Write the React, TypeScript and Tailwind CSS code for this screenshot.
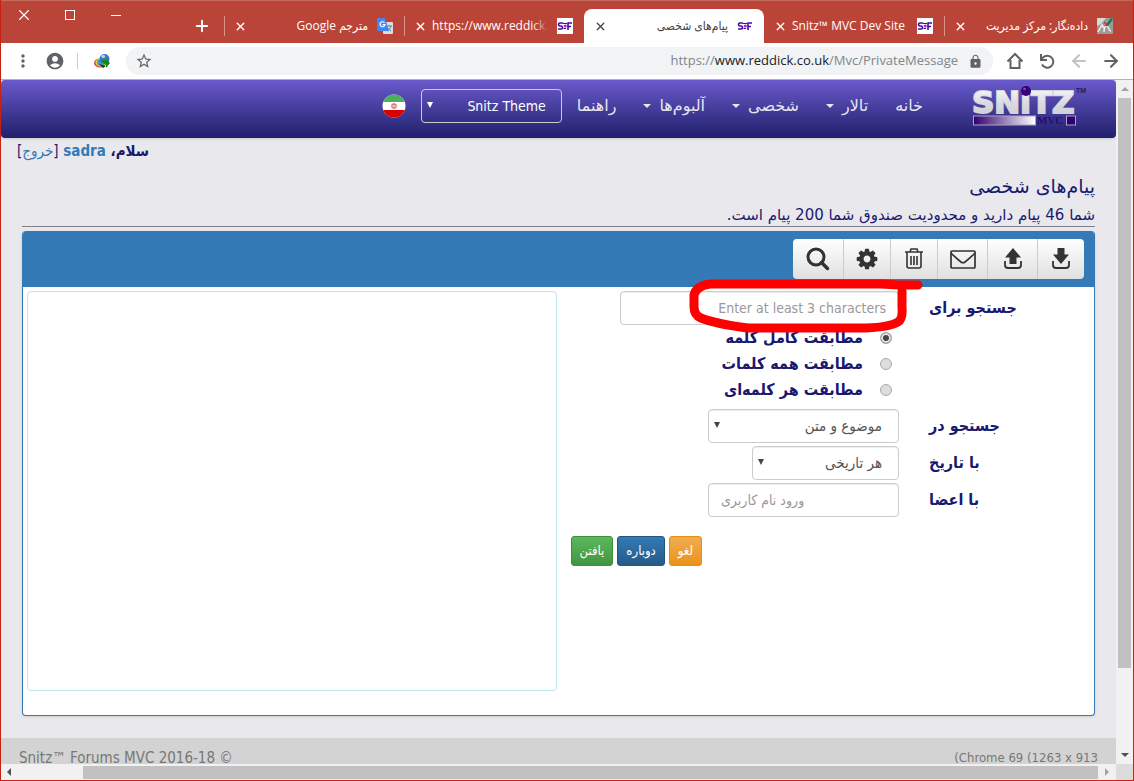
import type { ReactNode } from 'react'
import { ArrowLeft, ArrowRight, Plus, X } from 'lucide-react'
import { MdAccountCircle, MdLock, MdMoreVert, MdStarBorder } from 'react-icons/md'

function SnitzFavicon({ white = true }: { white?: boolean }) {
  return (
    <svg viewBox="0 0 16 16" className="size-4 shrink-0" fill="none" stroke="#3c0f9c" strokeWidth="1.600" aria-hidden="true">
      {white && <rect width="16" height="16" fill="#fff" stroke="none" />}
      <path d="M6 5H3Q1.500 5 1.500 6.500T3 8h1Q5.500 8 5.500 9.500T4 11H1" />
      <path d="M11 12V5h4M11 8.500h3" />
      <path d="M6 5.500h4M6.500 10.500H9" strokeWidth="1" />
      <circle cx="8.300" cy="8" r="1.600" fill="#c01ee0" stroke="none" />
    </svg>
  )
}

function TranslateFavicon() {
  return (
    <svg viewBox="0 0 16 16" className="size-4 shrink-0" aria-hidden="true">
      <rect x="6" y="4" width="10" height="12" rx="1" fill="#dcdcdc" />
      <path d="M9 8h6M12 7v1M14 8c-.5 2.500-2 4-4 5M10.500 9.500c.8 1.500 2 2.500 3.500 3.500" stroke="#6b8a95" fill="none" />
      <path d="M1 0h7l4 13H1a1 1 0 0 1-1-1V1a1 1 0 0 1 1-1z" fill="#4285f4" />
      <path d="M7.500 4.700A2.500 2.500 0 1 0 8 6.700H5.500" stroke="#fff" strokeWidth="1.200" fill="none" />
    </svg>
  )
}

function LeafFavicon() {
  return (
    <svg viewBox="0 0 16 16" className="size-4 shrink-0" aria-hidden="true">
      <rect width="16" height="16" fill="#9a9a96" />
      <path d="M0 0h9L4 6 0 8z" fill="#d8d8d4" />
      <path d="M1 14 5 7l2 3M7 14c0-4 1-6 3-6s1 5 4 5" stroke="#eee" strokeWidth="1.500" fill="none" />
      <path d="M8 8 14 0l2 1-5 7z" fill="#0a7a4c" />
      <path d="M7 4l3 3-1 1" stroke="#d03030" strokeWidth="1.500" fill="none" />
    </svg>
  )
}

type TabProps = { title: string; icon: ReactNode; active?: boolean; line?: boolean; fade?: boolean }

function Tab({ title, icon, active, line, fade }: TabProps) {
  return (
    <div
      className={
        active
          ? 'relative flex h-[34px] w-[180px] shrink items-center rounded-t-lg bg-white pr-[11px] pl-2 text-[#444]'
          : 'relative flex h-[34px] w-[180px] shrink items-center pr-[11px] pl-2 text-white'
      }
    >
      {icon}
      <span
        dir="auto"
        className="relative mr-[9px] ml-1 min-w-0 flex-1 font-[Open_Sans,DejaVu_Sans_Condensed,sans-serif] text-xs whitespace-nowrap"
      >
        {title}
        {fade && <span className="absolute inset-y-0 -right-2 w-6 bg-linear-to-r from-transparent to-[#bb4438] to-70%" />}
      </span>
      <button aria-label="بستن" className="flex size-4 items-center justify-center">
        <X size={13} strokeWidth={2.500} />
      </button>
      {line && <span className="absolute top-[7px] left-0 h-5 w-px bg-[#d9958c]" />}
    </div>
  )
}

function TitleBar() {
  return (
    <div className="flex h-[43px] items-end border-t border-[#c46a5f] bg-[#bb4438] pr-[9px]">
      <Tab title="داده‌نگار: مرکز مدیریت" icon={<LeafFavicon />} line />
      <Tab title="Snitz™ MVC Dev Site" icon={<SnitzFavicon />} />
      <Tab title="پیام‌های شخصی" icon={<SnitzFavicon white={false} />} active />
      <Tab title="https://www.reddick.c" icon={<SnitzFavicon />} line fade />
      <Tab title="مترجم Google" icon={<TranslateFavicon />} line />
      <button aria-label="زبانه جدید" className="mr-3 flex h-[34px] w-5 items-center justify-center text-white">
        <Plus size={18} strokeWidth={2.500} />
      </button>
      <div className="flex-1" />
      <div className="flex self-start text-white">
        <button aria-label="کوچک کردن" className="flex h-7 w-[46px] items-center justify-center">
          <span className="h-px w-[10px] bg-white" />
        </button>
        <button aria-label="بزرگ کردن" className="flex h-7 w-[46px] items-center justify-center">
          <span className="size-[10px] border border-white" />
        </button>
        <button aria-label="بستن پنجره" className="flex h-7 w-[46px] items-center justify-center">
          <X size={18} strokeWidth={1.500} />
        </button>
      </div>
    </div>
  )
}

function AddressBar() {
  return (
    <div className="flex h-[37px] items-center border-b border-[#b3b3b3] bg-white pr-3 text-[#5f6368]">
      <div className="flex items-center gap-3">
        <button aria-label="عقب"><ArrowRight size={20} strokeWidth={2.500} /></button>
        <button aria-label="جلو" className="text-[#c0c2c4]"><ArrowLeft size={20} strokeWidth={2.500} /></button>
        <button aria-label="بارگذاری">
          <svg viewBox="0 0 20 20" className="size-5" fill="none" stroke="currentColor" strokeWidth="2" aria-hidden="true">
            <path d="M4 3v6h6M4.500 8.500 6 6.500A6 6 0 1 1 5 13.500" />
          </svg>
        </button>
        <button aria-label="خانه">
          <svg viewBox="0 0 20 20" className="size-5" fill="none" stroke="currentColor" strokeWidth="2" aria-hidden="true">
            <path d="M2.500 10.500 10 3l7.500 7.500M5.500 9v8h9V9" />
          </svg>
        </button>
      </div>
      <div className="mr-3 flex h-7 flex-1 items-center rounded-full bg-[#f1f3f4] pr-[10px] pl-[9px]">
        <MdLock size={15} className="shrink-0" />
        <div
          dir="ltr"
          className="mr-[10px] flex-1 text-right font-[Open_Sans,sans-serif] text-[13px] whitespace-nowrap text-[#80868b]"
        >
          https://<span className="text-[#202124]">www.reddick.co.uk</span>/Mvc/PrivateMessage
        </div>
        <button aria-label="نشانک"><MdStarBorder size={18} /></button>
      </div>
      <svg viewBox="0 0 16 16" className="mr-4 size-4" aria-hidden="true">
        <ellipse cx="6" cy="10" rx="6" ry="4.500" fill="#e04a2c" />
        <ellipse cx="6.500" cy="9.500" rx="5" ry="4" fill="#f3d02c" />
        <ellipse cx="7" cy="9.500" rx="3.800" ry="3.200" fill="#2d9ad8" />
        <circle cx="10.500" cy="6" r="5" fill="#3d78c8" />
        <path d="M7 3c2-2 5-1 4 1S8 5 7 3z" fill="#b9d8f0" />
        <path d="M6 7h6V5l4 5-4 5v-3z" fill="#138a1c" />
        <path d="m5 11 4 4 3-2z" fill="#123c12" />
      </svg>
      <span className="mr-4 h-4 w-px bg-[#ccc]" />
      <button aria-label="نمایه" className="mr-3"><MdAccountCircle size={20} /></button>
      <button aria-label="فهرست" className="mr-3 ml-[12px]"><MdMoreVert size={20} /></button>
    </div>
  )
}

function Logo() {
  return (
    <svg viewBox="0 0 114 40" direction="ltr" className="h-10 w-[114px]" role="img" aria-label="Snitz MVC">
      <defs>
        <linearGradient id="metal" x1="0" y1="0" x2="0" y2="1">
          <stop offset="0" stopColor="#fff" />
          <stop offset="0.5" stopColor="#dcdce2" />
          <stop offset="1" stopColor="#c8c8d0" />
        </linearGradient>
        <linearGradient id="bar" x1="0" y1="0" x2="1" y2="0">
          <stop offset="0" stopColor="#30006c" />
          <stop offset="1" stopColor="#fff" />
        </linearGradient>
      </defs>
      <text
        x="0"
        y="27"
        fontFamily="DejaVu Sans"
        fontWeight="700"
        fontSize="31"
        stroke="#d2d2dc"
        strokeWidth="2"
        paintOrder="stroke"
        fill="url(#metal)"
      >
        SNıTZ
      </text>
      <circle cx="54" cy="5" r="5" fill="#35007a" />
      <circle cx="52.500" cy="3" r="1.300" fill="#7a4fb0" />
      <text x="104" y="7" fontFamily="Liberation Sans" fontSize="7" fontWeight="700" fill="#251a5c">TM</text>
      <rect x="1.500" y="30" width="62" height="9" fill="url(#bar)" stroke="#aaa2c8" />
      <text x="65" y="38" fontFamily="Liberation Serif" fontWeight="700" fontSize="11" fill="#2d0878">MVC</text>
      <rect x="94.500" y="30" width="9" height="9" fill="#30006c" stroke="#aaa2c8" />
    </svg>
  )
}

function Flag() {
  return (
    <svg viewBox="0 0 24 24" className="size-6" role="img" aria-label="فارسی">
      <clipPath id="round"><circle cx="12" cy="12" r="11.500" /></clipPath>
      <g clipPath="url(#round)">
        <rect width="24" height="24" fill="#fff" />
        <rect width="24" height="8" fill="#4caf60" />
        <rect y="16" width="24" height="8" fill="#d80000" />
      </g>
      <circle cx="12" cy="12" r="2.200" fill="none" stroke="#e46a6a" strokeWidth="1.200" />
      <path d="M12 9.500v5" stroke="#e46a6a" />
    </svg>
  )
}

const menu = [
  { label: 'خانه', caret: false },
  { label: 'تالار', caret: true },
  { label: 'شخصی', caret: true },
  { label: 'آلبوم‌ها', caret: true },
  { label: 'راهنما', caret: false },
]

function Navbar() {
  return (
    <nav className="flex h-[58px] items-center rounded bg-linear-to-b from-[#6a5acd] to-[#21206b] pr-[30px] pb-[6px] text-white shadow-sm">
      <a href="#" className="ml-[49px]"><Logo /></a>
      <div className="flex items-center gap-[27px]">
        {menu.map((m) => (
          <a key={m.label} href="#" className="flex items-center gap-1 font-[DejaVu_Sans,sans-serif] text-base whitespace-nowrap text-[#e6e6f0]">
            {m.label}
            {m.caret && <span className="mr-1 border-x-4 border-t-4 border-x-transparent border-t-current" />}
          </a>
        ))}
      </div>
      <div className="relative mr-[15px]">
        <select
          aria-label="Theme"
          className="h-[34px] w-[141px] appearance-none rounded border border-[#ccc] bg-transparent pr-[15px] pl-5 text-sm text-white"
        >
          <option>Snitz Theme</option>
        </select>
        <SelectArrow />
      </div>
      <a href="#" className="mr-[15px]"><Flag /></a>
    </nav>
  )
}

function SelectArrow() {
  return (
    <span className="pointer-events-none absolute top-[13px] left-[6px] border-x-[3px] border-t-[6px] border-x-transparent border-t-current" />
  )
}

const tray = <path d="M4 14v4q0 3 3 3h10q3 0 3-3v-4" fill="none" stroke="currentColor" strokeWidth="1.800" />

const tools = [
  {
    label: 'دریافتی',
    width: 'w-[47px]',
    icon: (
      <>
        <path d="M8.500 1h7v6.500H20L12 17 4 7.500h4.500z" />
        {tray}
      </>
    ),
  },
  {
    label: 'ارسالی',
    width: 'w-[50px]',
    icon: (
      <>
        <path d="m12 1 8 9.500h-4.500V17h-7v-6.500H4z" />
        {tray}
      </>
    ),
  },
  {
    label: 'پیام جدید',
    width: 'w-[50px]',
    icon: (
      <g fill="none" stroke="currentColor" strokeWidth="1.700">
        <rect x="0" y="4" width="24" height="17" rx="1" />
        <path d="M0 6q6 6 10 9 2 1.500 4 0 4-3 10-9" />
      </g>
    ),
  },
  {
    label: 'حذف',
    width: 'w-[47px]',
    icon: (
      <g fill="none" stroke="currentColor" strokeWidth="1.600">
        <path d="M3 5h18M8 5l1-3h6l1 3M5 5v14q0 2 2 2h10q2 0 2-2V5M9 9v9M12 9v9M15 9v9" />
      </g>
    ),
  },
  {
    label: 'تنظیمات',
    width: 'w-[47px]',
    icon: (
      <path
        transform="scale(0.0134)"
        d="M1152 896q0-106-75-181t-181-75-181 75-75 181 75 181 181 75 181-75 75-181zm512-109v222q0 12-8 23t-20 13l-185 28q-19 54-39 91 35 50 107 138 10 12 10 25t-9 23q-27 37-99 108t-94 71q-12 0-26-9l-138-108q-44 23-91 38-16 136-29 186-7 28-36 28h-222q-14 0-24.500-8.500t-11.500-21.500l-28-184q-49-16-90-37l-141 107q-10 9-25 9-14 0-25-11-126-114-165-168-7-10-7-23 0-12 8-23 15-21 51-66.500t54-70.500q-27-50-41-99l-183-27q-13-2-21-12.500t-8-23.500v-222q0-12 8-23t19-13l186-28q14-46 39-92-40-57-107-138-10-12-10-24 0-10 9-23 26-36 98.500-107.500t94.500-71.500q13 0 26 10l138 107q44-23 91-38 16-136 29-186 7-28 36-28h222q14 0 24.500 8.500t11.500 21.500l28 184q49 16 90 37l142-107q9-9 24-9 13 0 25 10 129 119 165 170 7 8 7 22 0 12-8 23-15 21-51 66.500t-54 70.500q26 50 41 98l183 28q13 2 21 12.500t8 23.500z"
      />
    ),
  },
  {
    label: 'جستجو',
    width: 'w-[50px]',
    icon: (
      <g fill="none" stroke="currentColor">
        <circle cx="10" cy="10" r="8" strokeWidth="3" />
        <path d="m15.500 15.500 6 6" strokeWidth="3.500" strokeLinecap="round" />
      </g>
    ),
  },
]

function Toolbar() {
  return (
    <div className="flex h-14 items-center bg-[#337ab7] px-[10px]">
      <div className="flex overflow-hidden rounded">
        {tools.map((t) => (
          <button
            key={t.label}
            aria-label={t.label}
            className={`${t.width} flex h-10 items-center justify-center border-l border-[#ccc] bg-linear-to-b from-white to-[#e0e0e0] text-[#333] last:border-l-0`}
          >
            <svg viewBox="0 0 24 24" className="size-6 overflow-visible" fill="currentColor" aria-hidden="true">
              {t.icon}
            </svg>
          </button>
        ))}
      </div>
    </div>
  )
}

const matches = ['مطابقت کامل کلمه', 'مطابقت همه کلمات', 'مطابقت هر کلمه‌ای']

const labelClass = 'w-[161px] shrink-0 text-left text-base leading-[34px] font-bold'
const fieldClass =
  'h-[34px] appearance-none rounded border border-[#ccc] bg-white px-3 text-[#555] shadow-[inset_0_1px_1px_rgba(0,0,0,0.075)] placeholder:text-[#999]'

function SearchForm() {
  return (
    <form className="flex flex-col gap-[3px] pr-1" onSubmit={(e) => e.preventDefault()}>
      <div className="flex gap-[30px]">
        <label htmlFor="term" className={labelClass}>جستجو برای</label>
        <div className="relative">
          <input id="term" placeholder="Enter at least 3 characters" className={`${fieldClass} w-[279px] text-sm`} />
          {/* hand-drawn marker around the hint */}
          <svg
            viewBox="0 0 240 56"
            className="pointer-events-none absolute -top-3 left-[66px] h-14 w-60"
            fill="none"
            stroke="#f00"
            strokeWidth="9"
            strokeLinecap="round"
            strokeLinejoin="round"
            aria-hidden="true"
          >
            <path d="M232 6H213L195 5H24Q10 7 8 16V28Q8 36 15 39 Q30 45 62 49H180Q204 48 212 43Q217 40 216 28V12" />
          </svg>
        </div>
      </div>
      <div className="-mt-[3px] mr-[191px] flex flex-col pb-[3px]">
        {matches.map((m, i) => (
          <label key={m} className="flex h-[26px] items-center gap-[17px] pr-[7px] text-base font-bold">
            <input
              type="radio"
              name="match"
              defaultChecked={i === 0}
              className="size-3 appearance-none rounded-full border border-[#aaa] bg-[#ddd] checked:bg-[#444] checked:shadow-[inset_0_0_0_2px_#e4e4e4]"
            />
            {m}
          </label>
        ))}
      </div>
      <div className="flex gap-[30px]">
        <label htmlFor="scope" className={labelClass}>جستجو در</label>
        <div className="relative text-[#444]">
          <select id="scope" className={`${fieldClass} w-[191px] pr-4 text-[15px]`}>
            <option>موضوع و متن</option>
          </select>
          <SelectArrow />
        </div>
      </div>
      <div className="flex gap-[30px]">
        <label htmlFor="date" className={labelClass}>با تاریخ</label>
        <div className="relative text-[#444]">
          <select id="date" className={`${fieldClass} w-[147px] pr-4 text-[15px]`}>
            <option>هر تاریخی</option>
          </select>
          <SelectArrow />
        </div>
      </div>
      <div className="flex gap-[30px]">
        <label htmlFor="member" className={labelClass}>با اعضا</label>
        <input id="member" placeholder="ورود نام کاربری" className={`${fieldClass} w-[191px] text-left text-sm`} />
      </div>
      <div className="mt-4 flex justify-end gap-1 pl-3 text-[13px] text-white">
        <button type="reset" className="h-[30px] rounded-[3px] border border-[#e38d13] bg-linear-to-b from-[#f0ad4e] to-[#eb9316] px-2">
          لغو
        </button>
        <button type="button" className="h-[30px] rounded-[3px] border border-[#245580] bg-linear-to-b from-[#337ab7] to-[#265a88] px-2">
          دوباره
        </button>
        <button type="submit" className="h-[30px] rounded-[3px] border border-[#3e8f3e] bg-linear-to-b from-[#5cb85c] to-[#419641] px-2">
          یافتن
        </button>
      </div>
    </form>
  )
}

function VerticalScroll() {
  return (
    <div className="flex w-[17px] shrink-0 flex-col items-center bg-[#f1f1f1]">
      <span className="my-[7px] border-x-4 border-b-4 border-x-transparent border-b-[#a3a3a3]" />
      <span className="w-[13px] flex-[571] bg-[#c1c1c1]" />
      <span className="flex-[78]" />
      <span className="my-[7px] border-x-4 border-t-4 border-x-transparent border-t-[#505050]" />
    </div>
  )
}

function HorizontalScroll() {
  return (
    <div dir="ltr" className="flex h-4 shrink-0 items-center bg-[#f1f1f1]">
      <span className="mx-[6px] border-y-4 border-r-4 border-y-transparent border-r-[#505050]" />
      <span className="w-[66px]" />
      <span className="h-[13px] flex-1 bg-[#c1c1c1]" />
      <span className="mx-[7px] border-y-4 border-l-4 border-y-transparent border-l-[#a3a3a3]" />
      <span className="h-full w-[17px] bg-[#dcdcdc]" />
    </div>
  )
}

export default function App() {
  return (
    <div
      dir="rtl"
      className="flex h-screen flex-col overflow-hidden border-x border-b border-[#c42314] bg-[#e9e9ed] font-[DejaVu_Sans_Condensed,DejaVu_Sans,sans-serif] text-[#191970]"
    >
      <TitleBar />
      <AddressBar />
      <div dir="ltr" className="flex min-h-0 flex-1">
        <div dir="rtl" className="flex min-w-0 flex-1 flex-col overflow-hidden">
          <Navbar />
          <div className="pl-4 text-left text-[15px] leading-[26px] font-bold">
            سلام، <a href="#" className="text-[#337ab7]">sadra</a>{' '}
            <span className="font-normal">[<a href="#" className="text-[#337ab7]">خروج</a>]</span>
          </div>
          <main className="flex flex-1 flex-col px-[21px] font-[DejaVu_Sans,sans-serif]">
            <h1 className="mt-2 text-[19px] leading-[28px]">پیام‌های شخصی</h1>
            <p className="mt-1 border-b border-[#808088] text-[15px] leading-[22px]">
              شما 46 پیام دارید و محدودیت صندوق شما 200 پیام است.
            </p>
            <section className="mt-1 flex flex-1 flex-col overflow-hidden rounded border border-t-0 border-[#337ab7] bg-white font-[DejaVu_Sans_Condensed,sans-serif] shadow-sm">
              <Toolbar />
              <div className="grid flex-1 grid-cols-2 pt-1">
                <SearchForm />
                <div className="mr-[2px] mb-6 ml-1 rounded border border-[#bce8f1]" />
              </div>
            </section>
          </main>
          <footer className="mt-[22px] flex h-[26px] shrink-0 items-start justify-between overflow-hidden bg-[#d3d3d3] px-[18px] pt-[10px] leading-5 whitespace-nowrap text-[#777]">
            <span dir="ltr" className="text-[13px]">(Chrome 69 (1263 x 913</span>
            <span dir="ltr" className="text-[15px]">Snitz™ Forums MVC 2016-18 ©</span>
          </footer>
        </div>
        <VerticalScroll />
      </div>
      <HorizontalScroll />
    </div>
  )
}
